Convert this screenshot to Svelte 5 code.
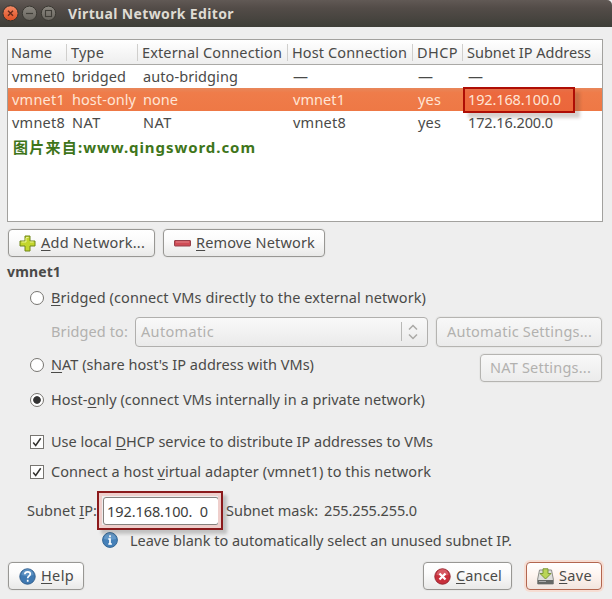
<script>
  const columns = [
    { label: 'Name', fit: 41, w: 59 },
    { label: 'Type', fit: 33, w: 71 },
    { label: 'External Connection', fit: 140, w: 150 },
    { label: 'Host Connection', fit: 115, w: 125 },
    { label: 'DHCP', fit: 41, w: 50 },
    { label: 'Subnet IP Address', fit: 124, w: 139 }
  ];
  const rows = [
    [['vmnet0', 53], ['bridged', 54], ['auto-bridging', 95], ['—', 16], ['—', 16], ['—', 16]],
    [['vmnet1', 53], ['host-only', 64], ['none', 35], ['vmnet1', 52], ['yes', 23], ['192.168.100.0', 93]],
    [['vmnet8', 53], ['NAT', 29], ['NAT', 29], ['vmnet8', 53], ['yes', 23], ['172.16.200.0', 85]]
  ];
  const selected = 1;

  // Tracks a label so that it fills the given width in pixels.
  function fit(node, width) {
    const natural = node.getBoundingClientRect().width;
    const count = [...node.textContent].length;
    node.style.letterSpacing = (width - natural) / count + 'px';
  }
</script>

{#snippet label(before, key, after, width)}
  <span class="t" use:fit={width}>{before}<u>{key}</u>{after}</span>
{/snippet}

<div class="window">
  <header class="titlebar">
    <svg width="60" height="27" viewBox="0 0 60 27">
      <defs>
        <linearGradient id="close" x1="0" y1="0" x2="0" y2="1"><stop offset="0" stop-color="#f58b66" /><stop offset="1" stop-color="#dd4e22" /></linearGradient>
        <linearGradient id="dim" x1="0" y1="0" x2="0" y2="1"><stop offset="0" stop-color="#8b8780" /><stop offset="1" stop-color="#69665f" /></linearGradient>
      </defs>
      <circle cx="10.5" cy="13.3" r="7.6" fill="url(#close)" stroke="#35332e" />
      <path d="M8 10.800l5 5M13 10.800l-5 5" stroke="#66291a" stroke-width="1.4" />
      <circle cx="29.5" cy="13.3" r="7.2" fill="url(#dim)" stroke="#3a3832" />
      <path d="M26 13.5h7" stroke="#403e38" stroke-width="1.2" />
      <circle cx="48.5" cy="13.3" r="7.2" fill="url(#dim)" stroke="#3a3832" />
      <rect x="45.5" y="10.5" width="6" height="6" fill="none" stroke="#403e38" stroke-width="1.1" />
    </svg>
    <span class="t title" use:fit={166}>Virtual Network Editor</span>
  </header>

  <section class="table">
    <div class="row head">
      {#each columns as c}
        <div class="cell" style:width="{c.w}px"><span class="t" use:fit={c.fit}>{c.label}</span></div>
      {/each}
    </div>
    {#each rows as row, r}
      <div class="row" class:selected={r === selected}>
        {#each row as [value, width], i}
          <div class="cell" style:width="{columns[i].w}px">
            {#if value === '—'}<span class="t dash">—</span>{:else}<span class="t" use:fit={width}>{value}</span>{/if}
            {#if r === selected && i === 5}<div class="mark address"></div>{/if}
          </div>
        {/each}
      </div>
    {/each}
    <div class="credit"><span class="t" use:fit={65}>图片来自</span><span class="t" use:fit={178}>:www.qingsword.com</span></div>
  </section>

  <div class="actions">
    <button class="add">
      <svg width="17" height="17" viewBox="0 0 17 17"><path d="M6 1h5v5h5v5h-5v5H6v-5H1V6h5z" fill="#c3d62c" stroke="#6f8618" /><path d="M7 2.5h2.5M7 3v4H2.5M11 7h3.5" fill="none" stroke="#eaf294" /></svg>
      {@render label('', 'A', 'dd Network...', 104)}
    </button>
    <button class="remove">
      <svg width="17" height="17" viewBox="0 0 17 17"><rect x=".5" y="5.5" width="16" height="5.500" rx=".5" fill="#cf4c56" stroke="#96404a" /><path d="M2 7h13" stroke="#e28489" /></svg>
      {@render label('', 'R', 'emove Network', 119)}
    </button>
  </div>

  <h2><span class="t" use:fit={54}>vmnet1</span></h2>

  <div class="option bridged"><i class="radio"></i>{@render label('', 'B', 'ridged (connect VMs directly to the external network)', 375)}</div>
  <div class="option bridge-to">
    <span class="t caption" use:fit={77}>Bridged to:</span>
    <div class="combo">
      <span class="t" use:fit={73}>Automatic</span>
      <svg width="26" height="22" viewBox="0 0 26 22"><path d="M.5 1v19" stroke="#b8b8b6" /><path d="M8 8.5l4-4 4 4M8 13.5l4 4 4-4" fill="none" stroke="#aaa9a6" stroke-width="1.5" /></svg>
    </div>
    <button class="auto" disabled><span class="t" use:fit={145}>Automatic Settings...</span></button>
  </div>
  <div class="option nat">
    <i class="radio"></i>{@render label('', 'N', "AT (share host's IP address with VMs)", 263)}
    <button class="nat-settings" disabled><span class="t" use:fit={101}>NAT Settings...</span></button>
  </div>
  <div class="option host"><i class="radio on"></i>{@render label('Host-', 'o', 'nly (connect VMs internally in a private network)', 374)}</div>

  {#snippet check()}
    <svg class="check" width="14" height="14" viewBox="0 0 14 14"><rect x=".5" y=".5" width="13" height="13" fill="#fff" stroke="#777571" /><path d="M3.2 7.4l2.5 3 5-7.2" fill="none" stroke="#33322f" stroke-width="1.5" /></svg>
  {/snippet}
  <div class="option dhcp">{@render check()}{@render label('Use local ', 'D', 'HCP service to distribute IP addresses to VMs', 382)}</div>
  <div class="option adapter">{@render check()}{@render label('Connect a host ', 'v', 'irtual adapter (vmnet1) to this network', 380)}</div>

  <div class="subnet">
    {@render label('Subnet ', 'I', 'P:', 70)}
    <div class="entry">
      <span class="t" use:fit={101}>192.168.100.  0</span>
      <div class="mark field"></div>
    </div>
    <span class="t mask" use:fit={92}>Subnet mask:</span>
    <span class="t" use:fit={93}>255.255.255.0</span>
  </div>
  <div class="hint">
    <svg width="16" height="16" viewBox="0 0 16 16"><circle cx="8" cy="8" r="7.4" fill="#4580b8" stroke="#356795" /><path d="M2 7a6 6 0 0 1 12 0Q8 8.5 2 7z" fill="#78a8d2" opacity=".6" /><path d="M8 3.2v2M6.3 7H8v5M6.3 12h3.6" stroke="#fff" stroke-width="1.7" fill="none" /></svg>
    <span class="t" use:fit={382}>Leave blank to automatically select an unused subnet IP.</span>
  </div>

  <footer>
    <button class="help">
      <svg width="17" height="17" viewBox="0 0 17 17"><circle cx="8.5" cy="8.5" r="7.7" fill="#3f79b2" stroke="#315f8e" /><path d="M2.5 7a6 6 0 0 1 12 0Q8.500 9 2.500 7z" fill="#78a8d2" opacity=".55" /><path d="M5.800 6.300Q6 3.900 8.600 3.900Q11.300 3.900 11.300 6.100Q11.300 7.300 9.800 8.200Q8.700 8.900 8.700 10.200M8.700 11.700v2" fill="none" stroke="#fff" stroke-width="1.7" /></svg>
      {@render label('', 'H', 'elp', 33)}
    </button>
    <button class="cancel">
      <svg width="17" height="17" viewBox="0 0 17 17"><circle cx="8.5" cy="8.5" r="7.7" fill="#c82f3b" stroke="#972630" /><path d="M2.500 7a6 6 0 0 1 12 0Q8.500 8.500 2.500 7z" fill="#e4868b" opacity=".5" /><path d="M5.500 5.500l6 6M11.500 5.500l-6 6" stroke="#fff" stroke-width="2.300" /></svg>
      {@render label('', 'C', 'ancel', 46)}
    </button>
    <button class="save">
      <svg width="17" height="17" viewBox="0 0 17 17"><path d="M2.500 2h12l1.800 9v5H.7v-5z" fill="#dededc" stroke="#8d8d89" /><path d="M.7 12h15.600v4H.7z" fill="#666865" /><path d="M2 13.500h7" stroke="#aaa" /><path d="M6 .8h5v4.700h3L8.500 11 3 5.500h3z" fill="#b9d557" stroke="#799638" /></svg>
      {@render label('', 'S', 'ave', 33)}
    </button>
  </footer>
</div>

<style>
  .window {
    width: 612px;
    height: 599px;
    box-sizing: border-box;
    overflow: hidden;
    display: flex;
    flex-direction: column;
    background: #eee;
    color: #4a4a48;
    font: 14.5px/20px 'Noto Sans', 'Noto Sans CJK SC', sans-serif;
  }
  .t { display: inline-block; flex: none; white-space: pre; padding-bottom: 2px; }
  .titlebar .t, .head .t, .credit .t, .hint .t, h2 .t { padding-bottom: 0; }
  u { text-decoration-thickness: 1px; text-underline-offset: 2px; text-decoration-skip-ink: none; }
  .titlebar {
    height: 27px;
    flex: none;
    display: flex;
    align-items: center;
    background: linear-gradient(#615955, #534c48 30%, #3e3e38);
    border-radius: 0 5px 0 0;
  }
  .title { margin-left: 8px; font-weight: 700; font-size: 14px; color: #dfdbd2; }
  .table {
    box-sizing: border-box;
    flex: none;
    width: 596px;
    height: 183px;
    margin: 12px 0 0 7px;
    border: 1px solid #a2a19e;
    background: #fff;
  }
  .row { display: flex; height: 23px; }
  .cell { box-sizing: border-box; flex: none; display: flex; align-items: center; padding-left: 4px; position: relative; }
  .head { height: 25px; box-sizing: border-box; background: linear-gradient(#fff, #eee); border-bottom: 1px solid #aaa9a6; }
  .head .cell { height: 24px; padding-left: 3px; }
  .head .cell + .cell::before { content: ''; position: absolute; left: -1px; top: 4px; height: 17px; border-left: 1px solid #d0cfcd; }
  .head .cell + .cell { padding-left: 4px; }
  .row:not(.head) .cell + .cell { padding-left: 5px; }
  .selected { background: linear-gradient(#e8875a, #ef7c4a 20%, #ee7845); color: #ffe5d5; }
  .dash { font-size: 15px; font-weight: 500; }
  .mark { position: absolute; box-sizing: border-box; border: 2px solid #8b1a1c; pointer-events: none; }
  .address { z-index: 0; left: 0; top: -1px; width: 112px; height: 26px; border-color: #ae0d05; background: rgba(220, 20, 10, .18); box-shadow: 5px 5px 3px rgba(90, 70, 60, .25); }
  .selected .t { position: relative; z-index: 1; }
  .credit { height: 26px; display: flex; align-items: center; padding-left: 5px; color: #3e751a; font-weight: 700; font-size: 15px; }
  button {
    box-sizing: border-box;
    height: 28px;
    padding: 0 0 0 10px;
    display: flex;
    align-items: center;
    gap: 4px;
    flex: none;
    font: inherit;
    color: inherit;
    border: 1px solid #989794;
    border-radius: 4px;
    background: linear-gradient(#fff, #fbfbfb 40%, #e9e9e8);
    box-shadow: 0 0 0 1px #e7e7e6;
  }
  button:disabled { color: #b2b1af; border-color: #b5b4b1; background: linear-gradient(#f8f8f8, #ebebeb); }
  .actions { display: flex; flex: none; gap: 8px; margin: 7px 0 0 8px; }
  .add { width: 147px; }
  .remove { width: 162px; }
  .remove, .add, footer button { gap: 5px; }
  h2 { height: 20px; flex: none; margin: 5px 0 0 7px; font-size: 14px; }
  .option { display: flex; flex: none; align-items: center; height: 20px; margin-left: 30px; }
  .radio { box-sizing: border-box; flex: none; width: 14px; height: 14px; border: 1px solid #777571; border-radius: 50%; background: #fff; margin-right: 7px; }
  .radio.on { background: radial-gradient(circle, #333 0 3.4px, #fff 4.2px); }
  .check { flex: none; margin-right: 7px; }
  .bridged { margin-top: 6px; }
  .bridge-to { height: 30px; margin-top: 9px; }
  .caption { margin-left: 21px; color: #b2b1af; }
  .combo {
    box-sizing: border-box;
    width: 293px;
    height: 30px;
    margin-left: 7px;
    padding-left: 5px;
    display: flex;
    align-items: center;
    justify-content: space-between;
    border: 1px solid #b0afad;
    border-radius: 4px;
    color: #b2b1af;
    background: linear-gradient(#f9f9f9, #eaeaea);
  }
  .auto { width: 166px; height: 30px; margin-left: 8px; }
  .nat { height: 28px; margin-top: 7px; }
  .nat > .t { margin-bottom: 6px; }
  .nat .radio { margin-bottom: 6px; }
  .nat-settings { width: 122px; margin-left: 166px; padding-left: 9px; }
  .host { margin-top: 8px; }
  .dhcp { margin-top: 22px; }
  .adapter { margin-top: 10px; }
  .subnet { display: flex; flex: none; align-items: center; height: 30px; margin: 14px 0 0 27px; }
  .entry { box-sizing: border-box; position: relative; width: 116px; height: 28px; margin-left: 6px; padding-left: 3px; display: flex; align-items: center; background: #fff; border: 1px solid #85817e; border-radius: 3px; color: #3d3d3b; }
  .entry .t { padding-bottom: 0; }
  .field { left: -7px; top: -7px; width: 126px; height: 39px; box-shadow: inset 0 0 0 3px #efcfcc, 4px 4px 3px rgba(80, 80, 80, .28); }
  .mask { margin: 0 7px 0 7px; }
  .mask + .t { margin-left: -1px; }
  .hint { display: flex; flex: none; align-items: center; height: 20px; margin: 4px 0 0 102px; }
  .hint .t { margin-left: 12px; }
  footer { display: flex; flex: none; margin: 12px 0 0 8px; }
  .help { width: 76px; }
  .cancel { width: 89px; margin-left: 339px; }
  .save { width: 76px; margin-left: 14px; border-color: #b3664f; background: linear-gradient(#fff, #fff5f0 45%, #f1e5df); box-shadow: 0 0 0 2px #f6ddd3; }
</style>
